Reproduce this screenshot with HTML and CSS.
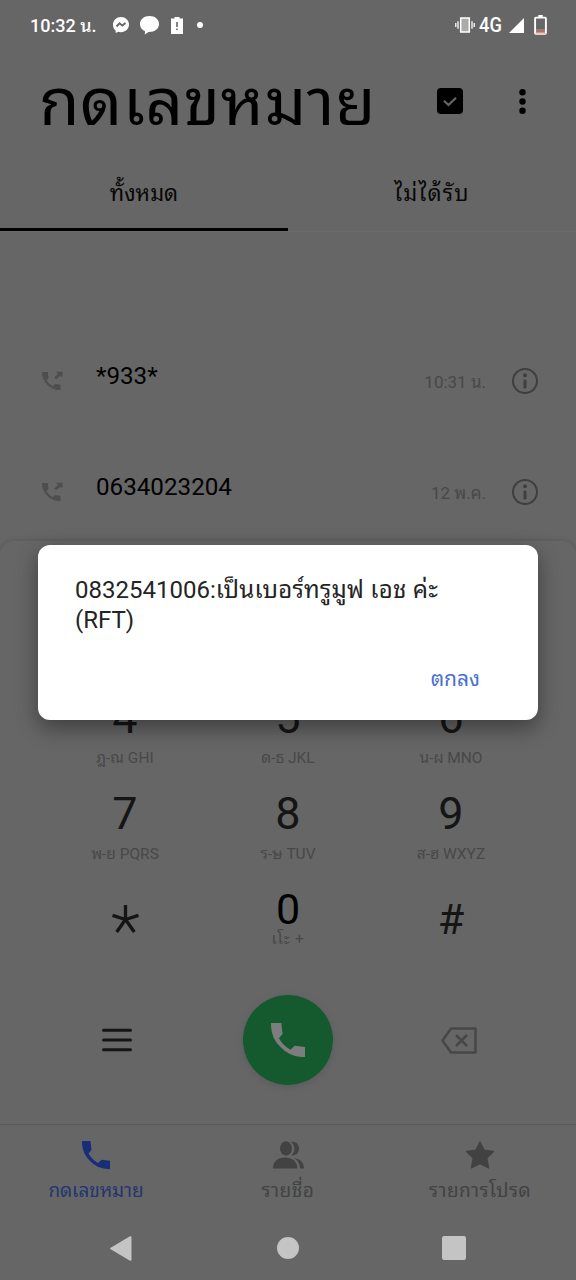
FILE: index.html
```html
<!DOCTYPE html>
<html lang="th">
<head>
<meta charset="utf-8">
<title>กดเลขหมาย</title>
<link rel="stylesheet" href="styles.css">
</head>
<body>
<svg width="0" height="0" class="defs">
  <symbol id="handset" viewBox="0 0 28 28"><path d="M0 0H8.500L9.500 9 6.500 12.500Q10 18.500 16 22L19.500 18.800 28 19.700V28Q16 28.500 8 20Q-.5 12 0 0Z"/></symbol>
  <symbol id="outgoing" viewBox="0 0 22 20"><path d="M0 1H5.800L6.500 7 4.500 9.500Q7 13 10.700 15.200L13 13 18.500 13.800V19Q11 19.500 5.500 14Q0 8.500 0 1Z"/><path d="M14 .8H20.500V6.500L18.600 4.800 14 8.200 12.200 6.400 16 2.900Z"/></symbol>
  <symbol id="info" viewBox="0 0 26 26"><circle cx="13" cy="13" r="12" fill="none" stroke="currentColor" stroke-width="2"/><circle cx="13" cy="7.200" r="2"/><rect x="11.500" y="11.500" width="3" height="9" rx="1.300"/></symbol>
</svg>
<div class="screen">
  <div class="status">
    <span class="clock">10:32 น.</span>
    <svg class="messenger" viewBox="0 0 16 16"><path fill="#fff" d="M8 0C3.500 0 0 3.300 0 7.700c0 2.400 1 4.400 2.600 5.800L2.700 16l2.600-1.200c.8.300 1.700.4 2.700.4 4.500 0 8-3.200 8-7.600S12.500 0 8 0z"/><path d="M3.500 9.500 6.600 6.300 9.300 8.600 12.500 6" fill="none" stroke="#666" stroke-width="1.900"/></svg>
    <svg class="bubble" viewBox="0 0 19 19"><path fill="#fff" d="M9.500 0C4 0 0 3.500 0 8c0 3.500 2 6 5 7.300L4.800 18.500 8.500 16C14.500 16.200 19 13 19 8c0-4.500-4-8-9.500-8z"/></svg>
    <svg class="alert" viewBox="0 0 12 17"><path fill="#fff" d="M3.500 0h5v1.600H12V17H0V1.600h3.500z"/><path d="M5.200 5h1.600v5H5.200zM5.200 11.500h1.600v1.600H5.200z" fill="#666"/></svg>
    <i class="dot"></i>
    <svg class="vibrate" viewBox="0 0 20 16"><path d="M.8 6v4M3 4.300v7.400M17 4.300v7.400M19.200 6v4" stroke="#fff" stroke-width="1.300"/><rect x="5.700" y="1" width="8.600" height="14" fill="#aaa" stroke="#fff" stroke-width="1.500"/></svg>
    <span class="net">4G</span>
    <svg class="signal" viewBox="0 0 15 15"><path fill="#fff" d="M15 0V15H0z"/></svg>
    <svg class="battery" viewBox="0 0 13 20"><path d="M4.300 0h4.400v2H4.300z" fill="#fff"/><path fill="#a8756a" d="M2 14h9v4H2z"/><rect x="1.100" y="2.600" width="10.800" height="16.200" rx=".8" fill="none" stroke="#fff" stroke-width="1.900"/><path d="M1 18.700h11" stroke="#f0c9bd" stroke-width="1.500"/></svg>
  </div>

  <header class="header">
    <h1 class="title">กดเลขหมาย</h1>
    <svg class="select" viewBox="0 0 26 26"><rect width="26" height="26" rx="4"/><path d="M7 12.800 11.500 17 19 9.800" fill="none" stroke="#666" stroke-width="2.200"/></svg>
    <svg class="more" viewBox="0 0 7 25"><circle cx="3.500" cy="3.300" r="3.200"/><circle cx="3.500" cy="12.500" r="3.200"/><circle cx="3.500" cy="21.700" r="3.200"/></svg>
  </header>

  <nav class="tabs">
    <div class="tab active"><span class="tab-all">ทั้งหมด</span></div>
    <div class="tab"><span class="tab-missed">ไม่ได้รับ</span></div>
  </nav>

  <main class="calls">
    <div class="call"><svg class="out"><use href="#outgoing"/></svg><span class="number">*933*</span><span class="when">10:31 น.</span><svg class="info"><use href="#info"/></svg></div>
    <div class="call"><svg class="out"><use href="#outgoing"/></svg><span class="number">0634023204</span><span class="when">12 พ.ค.</span><svg class="info"><use href="#info"/></svg></div>
  </main>

  <section class="pad">
    <div class="keys">
      <div class="key"><b>4</b><small>ฎ-ณ GHI</small></div>
      <div class="key"><b>5</b><small>ด-ธ JKL</small></div>
      <div class="key"><b>6</b><small>น-ผ MNO</small></div>
      <div class="key"><b>7</b><small>พ-ย PQRS</small></div>
      <div class="key"><b>8</b><small>ร-ษ TUV</small></div>
      <div class="key"><b>9</b><small>ส-ฮ WXYZ</small></div>
      <div class="key symbol"><svg class="star-key" viewBox="0 0 26 27"><path d="M13 14V0M13 14 .5 10M13 14 25.500 10M13 14 4.500 26M13 14 21.500 26" fill="none" stroke="#151515" stroke-width="3.200"/></svg></div>
      <div class="key zero"><b>0</b><small>เโะ +</small></div>
      <div class="key symbol"><b class="hash">#</b></div>
    </div>
    <div class="actions">
      <svg class="menu" viewBox="0 0 30 24"><path d="M1.500 2.200h27M1.500 12h27M1.500 21.800h27" stroke="#151515" stroke-width="3" stroke-linecap="round"/></svg>
      <div class="dial"><svg class="dial-icon"><use href="#handset"/></svg></div>
      <svg class="erase" viewBox="0 0 36 27"><path d="M10 1.500H34.500V25.500H10L1.500 13.500ZM15 8 26 19M26 8 15 19" fill="none" stroke="#474747" stroke-width="2.500" stroke-linejoin="round"/></svg>
    </div>
  </section>

  <nav class="bottom">
    <div class="item current"><svg class="item-icon phone-icon"><use href="#handset"/></svg><span class="nav-dial">กดเลขหมาย</span></div>
    <div class="item"><svg class="item-icon people" viewBox="0 0 31 28"><ellipse cx="13" cy="7.500" rx="6" ry="7.200"/><path d="M0 27.500C0 20 5 16.500 12 16.500S24 20 24.500 27.500ZM18 .7C23 .5 26 3 26 7.500S23 14.500 18.500 14.500C22.500 10 22.500 5 18 .7ZM21 17C27.500 18 31 22 31 27.500H27C27 23 25 19.500 21 17Z"/></svg><span class="nav-contacts">รายชื่อ</span></div>
    <div class="item"><svg class="item-icon fav" viewBox="0 0 30 28"><path d="M15 1 19 9.300 28.500 10.500 21.700 17.200 23.600 26.800 15 22.500 6.400 26.800 8.300 17.200 1.500 10.500 11 9.300Z" stroke="currentColor" stroke-width="1.400" stroke-linejoin="round"/></svg><span class="nav-fav">รายการโปรด</span></div>
  </nav>
  <div class="system">
    <svg class="back" viewBox="0 0 22 25"><path d="M20.500 1.200V23.800L1.200 12.500Z" fill="#c4c4c4" stroke="#c4c4c4" stroke-width="2" stroke-linejoin="round"/></svg>
    <i class="home"></i>
    <i class="recent"></i>
  </div>

  <div class="dialog">
    <p class="message">0832541006:<span class="msg-th">เป็นเบอร์ทรูมูฟ เอช ค่ะ</span> (RFT)</p>
    <span class="ok">ตกลง</span>
  </div>
</div>
</body>
</html>
```
FILE: styles.css
```css
* { box-sizing: border-box; }
body { margin: 0; background: #666; font-family: Roboto, "Noto Sans Thai Looped", "Noto Looped Thai", "Droid Sans Thai", Loma, Garuda, Waree, Umpush, "Noto Sans Thai", sans-serif; color: #000; }
.defs { position: absolute; }
svg { display: block; flex: none; fill: currentColor; }
.screen { position: relative; width: 576px; height: 1280px; overflow: hidden; display: flex; flex-direction: column; }
.screen > * { flex: none; }
span { white-space: nowrap; }

.status { height: 50px; display: flex; align-items: center; padding-left: 30px; color: #fff; }
.clock { font-size: 18px; font-weight: 500; line-height: 24px; width: 83px; padding-top: 2px; }
.messenger { width: 16px; height: 16px; }
.bubble { width: 19px; height: 19px; margin-left: 11px; }
.alert { width: 12px; height: 17px; margin-left: 12px; }
.dot { width: 6px; height: 6px; border-radius: 50%; background: #fff; margin-left: 14px; }
.vibrate { width: 20px; height: 16px; margin-left: 252px; }
.net { font-size: 21px; font-weight: 500; line-height: 24px; width: 24px; margin-left: 4px; transform: scaleX(.87); transform-origin: left; }
.signal { width: 15px; height: 15px; margin-left: 6px; }
.battery { width: 13px; height: 20px; margin-left: 10px; }

.header { height: 103px; display: flex; align-items: flex-start; padding-left: 39px; }
.title { margin: 8px 0 0; width: 398px; font-size: 66px; line-height: 90px; font-weight: 400; letter-spacing: .4px; white-space: nowrap; }
.select { width: 26px; height: 26px; margin-top: 38px; }
.more { width: 7px; height: 25px; margin: 39px 0 0 56px; }

.tabs { height: 79px; display: grid; grid-template-columns: 1fr 1fr; border-bottom: 1px solid #6b6b6b; }
.tab { height: 78px; display: flex; justify-content: center; padding-top: 26px; font-size: 22px; line-height: 30px; color: #080808; }
.tab-missed { letter-spacing: 1.2px; }
.active { border-bottom: 3px solid #000; }

.calls { height: 309px; padding-top: 93px; }
.call { height: 111px; display: flex; padding-left: 42px; }
.out { width: 22px; height: 20px; margin-top: 46px; color: #4e4e4e; }
.number { width: 240px; margin: 36px 0 0 32px; font-size: 24.200px; line-height: 30px; }
.when { flex: 1; margin-top: 45px; text-align: right; font-size: 17px; line-height: 24px; color: #484848; }
.info { width: 26px; height: 26px; margin: 43px 38px 0 26px; color: #3f3f3f; }

.pad { position: relative; height: 583px; background: #666; border-radius: 14px 14px 0 0; box-shadow: 0 -1px 4px #595959; padding-top: 149px; }
.keys { display: grid; grid-template-columns: repeat(3, 163px); grid-auto-rows: 96px; justify-content: center; }
.key { display: flex; flex-direction: column; align-items: center; color: #151515; }
.key b { font-size: 45px; line-height: 54px; font-weight: 400; margin-top: 1px; }
.key small { font-size: 15.500px; line-height: 20px; color: #484848; margin-top: 3px; white-space: nowrap; }
.key.zero b { font-size: 43px; color: #000; line-height: 40px; margin-top: 7px; }
.key.zero small { margin-top: 0; letter-spacing: .6px; }
.symbol { padding-top: 9px; }
.star-key { width: 27px; height: 28px; margin-top: 14px; }
.key .hash { font-size: 43px; }
.actions { display: flex; align-items: center; height: 90px; margin-top: 17px; padding-left: 102px; }
.menu { width: 30px; height: 24px; }
.dial { width: 90px; height: 90px; border-radius: 50%; background: #145a2e; margin-left: 111px; display: flex; align-items: center; justify-content: center; color: #7d7d7d; box-shadow: 0 2px 6px #5b5b5b; }
.dial-icon { width: 34px; height: 34px; }
.erase { width: 36px; height: 27px; margin-left: 108px; }

.bottom { height: 92px; display: grid; grid-template-columns: repeat(3, 192px); border-top: 1px solid #595959; }
.item { display: flex; flex-direction: column; align-items: center; padding-top: 16px; color: #424242; }
.item span { font-size: 19px; line-height: 26px; margin-top: 9px; letter-spacing: .5px; }
.item .nav-dial { color: #23366f; letter-spacing: -.1px; }
.current { color: #192e78; }
.item-icon { width: 31px; height: 28px; }
.phone-icon { width: 28px; }
.fav { width: 30px; }
.system { height: 64px; display: flex; align-items: center; padding-left: 110px; }
.back { width: 22px; height: 25px; }
.home { width: 22px; height: 22px; border-radius: 50%; background: #c4c4c4; margin-left: 145px; }
.recent { width: 24px; height: 24px; border-radius: 2px; background: #c4c4c4; margin-left: 143px; }

/* Modal floats over the dimmed dialer */
.dialog { position: absolute; left: 38px; top: 545px; width: 500px; height: 175px; border-radius: 12px; background: #fff; padding: 30px 58px 0 37px; box-shadow: 0 8px 22px rgba(0,0,0,.4); display: flex; flex-direction: column; }
.message { margin: 0; font-size: 24px; line-height: 30px; color: #242424; }
.msg-th { letter-spacing: .25px; }
.ok { align-self: flex-end; margin-top: 29px; font-size: 21px; line-height: 30px; color: #4a6fd0; }
```
